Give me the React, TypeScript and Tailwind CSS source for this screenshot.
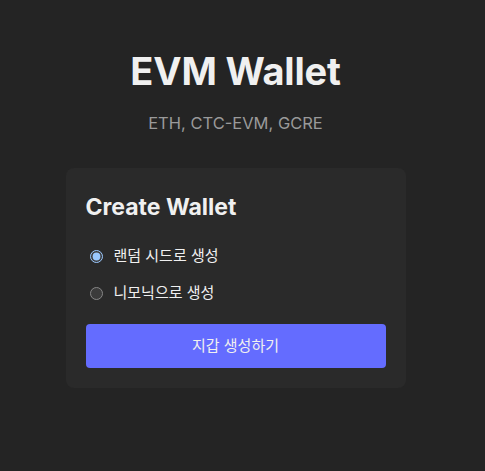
export default function App() {
  return (
    <div
      className="min-h-[471px] w-full bg-[#242424] text-[#f0f0f0] scheme-dark"
      style={{ fontFamily: 'Inter, "Noto Sans CJK KR", sans-serif' }}
    >
      <div className="flex flex-col items-center pr-[14px] pt-[47px]">
        {/* Header */}
        <h1 className="text-[38px] font-bold leading-[48px] tracking-[-0.2px]">EVM Wallet</h1>
        <p className="mt-[16px] text-[16.5px] leading-[24px] text-[#9a9a9a]">ETH, CTC-EVM, GCRE</p>

        {/* Card */}
        <div className="mt-[33px] w-[340px] rounded-[8px] bg-[#2a2a2a] px-[20px] pb-[20px] pt-[24px]">
          <h2 className="text-[23px] font-bold leading-[30px]">Create Wallet</h2>
          <div className="mt-[23px] flex flex-col gap-[15px] pl-[4px]">
            <label className="flex h-[22px] items-center gap-[11px] text-[15px]">
              <input type="radio" name="mode" defaultChecked className="m-0 h-[13px] w-[13px]" />
              랜덤 시드로 생성
            </label>
            <label className="flex h-[22px] items-center gap-[11px] text-[15px]">
              <input type="radio" name="mode" className="m-0 h-[13px] w-[13px]" />
              니모닉으로 생성
            </label>
          </div>
          <button className="mt-[20px] h-[44px] w-full rounded-[4px] bg-[#646cff] text-[15px] text-[#f0f0f0]">
            지갑 생성하기
          </button>
        </div>
      </div>
    </div>
  );
}
